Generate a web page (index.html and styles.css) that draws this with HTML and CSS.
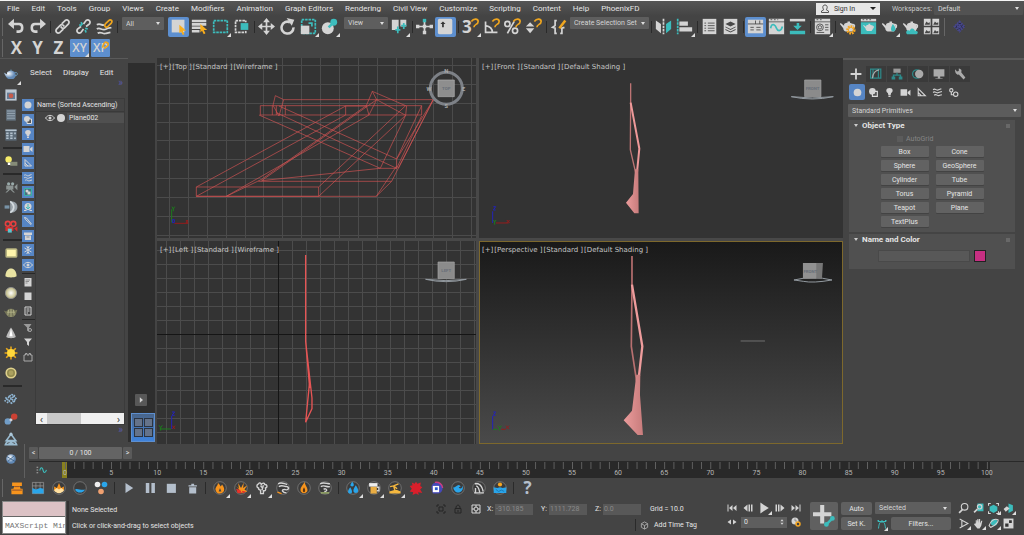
FILE: index.html
```html
<!DOCTYPE html>
<html lang="en">
<head>
<meta charset="utf-8">
<meta name="viewport" content="width=device-width, initial-scale=1">
<title>Scene editor</title>
<link rel="stylesheet" href="styles.css">
</head>
<body>
<svg class="defs" aria-hidden="true">
  <defs>
    <symbol id="teapot" viewBox="0 0 20 20"><path class="l" d="M6 7c2-2 8-2 10 0 3 4 1 8-1 9H8c-3-1-3-4-3-4L1 7l1-1 4 3zM10 4h3v2h-3z"/><path class="sl" d="M15 8c4-1 4 3 1 4"/></symbol>
    <symbol id="sphere" viewBox="0 0 20 20"><circle class="l" cx="10" cy="10" r="7"/></symbol>
    <symbol id="shapes" viewBox="0 0 20 20"><circle class="l" cx="8" cy="8" r="6"/><path d="M8 8h9v9H8z" fill="#555" stroke="#ddd" stroke-width="2"/><circle cx="10" cy="10" r="3" class="l"/></symbol>
    <symbol id="bulb" viewBox="0 0 20 20"><path class="l" d="M10 2c7 0 7 7 3 9l-1 4H8l-1-4C3 9 3 2 10 2zM8 16h4v2H8z"/></symbol>
    <symbol id="camera" viewBox="0 0 20 20"><path class="l" d="M1 4h12v12H1zM14 9l5-4v11l-5-4z"/></symbol>
    <symbol id="helper" viewBox="0 0 20 20"><path class="sl" stroke-width="3" d="M4 3v13h13zM4 10l6 6"/></symbol>
    <symbol id="waves" viewBox="0 0 20 20"><path class="sl" d="M2 5c4-4 6 3 10 0l5-2M2 10c4-4 6 3 10 0l6-2M4 15c4-4 6 3 10 0l4-1"/></symbol>
    <symbol id="magnet" viewBox="0 0 20 20"><path class="so" d="M11 4c3-4 8-3 8 0 0 4-5 3-5 7"/></symbol>
    <symbol id="eye" viewBox="0 0 20 20"><path class="sl" d="M1 10c5-7 13-7 18 0-5 7-13 7-18 0z"/><circle class="l" cx="10" cy="10" r="3"/></symbol>
    <symbol id="plus" viewBox="0 0 20 20"><path class="l" d="M8 1h4v7h7v4h-7v7H8v-7H1V8h7z"/></symbol>
    <radialGradient id="ball" cx=".4" cy=".35"><stop offset="0" stop-color="#fff"/><stop offset="1" stop-color="#6289b5"/></radialGradient>
    <radialGradient id="cream"><stop offset="0" stop-color="#fff"/><stop offset="1" stop-color="#bcb67c"/></radialGradient>
    <linearGradient id="skin" x1="0" x2="1"><stop offset="0" stop-color="#eb9c9c"/><stop offset="1" stop-color="#c87c7c"/></linearGradient>
    <pattern id="grid14" width="14" height="14" patternUnits="userSpaceOnUse" x="9" y="9"><path d="M0 .5h14M.5 0v14" stroke="#4c4c4c"/></pattern>
  </defs>
</svg>

<header class="menubar">
  <nav class="menus" aria-label="Main menu">
    <button>File</button><button>Edit</button><button>Tools</button><button>Group</button><button>Views</button><button>Create</button><button>Modifiers</button><button>Animation</button><button>Graph Editors</button><button>Rendering</button><button>Civil View</button><button>Customize</button><button>Scripting</button><button>Content</button><button>Help</button><button>PhoenixFD</button>
  </nav>
  <button class="signin"><svg viewBox="0 0 20 20"><path fill="none" stroke="#555" stroke-width="2" d="M10 2c6 0 5 8 2 9l5 3v3H3v-3l5-3C5 10 4 2 10 2z"/></svg><span>Sign In</span><i class="caret"></i></button>
  <label class="ws" for="workspace">Workspaces:</label>
  <span class="drop workspace"><select id="workspace"><option>Default</option></select></span>
</header>

<div class="toolbar" role="toolbar" aria-label="Main toolbar">
  <i class="grip"></i>
  <button class="ico" aria-label="Undo"><svg viewBox="0 0 20 20"><path class="sl b" d="M4 7h9c5 0 5 9 0 9h-3"/><path class="l" d="M0 7l7-6v12z"/></svg></button>
  <button class="ico" aria-label="Redo"><svg viewBox="0 0 20 20"><path class="sl b" d="M16 7H7c-5 0-5 9 0 9h3"/><path class="l" d="M20 7l-7-6v12z"/></svg></button>
  <i class="sep"></i>
  <button class="ico" aria-label="Link"><svg viewBox="0 0 20 20"><path class="sl" d="M9 7l4-4c3-2 6 1 4 4l-4 4c-2 2-4 1-5-1M11 13l-4 4c-3 2-6-1-4-4l4-4c2-2 4-1 5 1"/></svg></button>
  <button class="ico" aria-label="Unlink"><svg viewBox="0 0 20 20"><path class="sl" d="M10 7l3-4c3-2 6 1 4 4l-4 3M10 13l-3 4c-3 2-6-1-4-4l4-3"/><path class="st" d="M7 5l2 3M5 8l3 1M12 12l3 1M12 14l1 3"/></svg></button>
  <button class="ico" aria-label="Bind to space warp"><svg viewBox="0 0 20 20"><path class="sl" d="M1 8c4-3 6 2 9 0M1 13c4-3 6 3 11 0 3-2 5-1 6-2M2 18c4-3 6 2 10 0l5-1"/><path class="so" d="M11 7l4-4c2-2 5 0 3 3l-4 4c-2 2-5 0-3-3z"/></svg></button>
  <i class="sep wide"></i>
  <span class="drop filter"><select aria-label="Selection filter"><option>All</option></select></span>
  <button class="ico on first" aria-label="Select object"><svg viewBox="0 0 20 20"><path class="l" d="M2 2h15v15H2z"/><path class="o" d="M11 8l8 7h-4l2 4-2 1-2-4-2 2z"/></svg></button>
  <button class="ico" aria-label="Select by name"><svg viewBox="0 0 20 20"><path class="l" d="M1 2h17v3H1zM1 6h17v3H1zM1 10h11v3H1zM1 14h9v3H1z"/><path class="o" d="M11 7l8 7h-4l2 4-2 1-2-4-2 2z"/></svg></button>
  <button class="ico fly" aria-label="Rectangular region"><svg viewBox="0 0 20 20"><path class="st dash" d="M2 3h16v14H2z"/></svg></button>
  <button class="ico" aria-label="Window crossing"><svg viewBox="0 0 20 20"><path class="sl dash" d="M3 3h12v14H3z"/><path fill="#444" d="M8 5h11v10H8z"/><path class="t" d="M9 6h9v8H9z"/></svg></button>
  <i class="sep"></i>
  <button class="ico" aria-label="Move"><svg viewBox="0 0 20 20"><path class="sl" d="M10 3v14M3 10h14"/><path class="l" d="M10 0l4 5H6zM10 20l4-5H6zM0 10l5-4v8zM20 10l-5-4v8z"/></svg></button>
  <button class="ico" aria-label="Rotate"><svg viewBox="0 0 20 20"><path class="sl b" d="M13 5a7 7 0 1 0 4 6"/><path class="l" d="M9 0l9 2-3 7z"/></svg></button>
  <button class="ico fly" aria-label="Scale"><svg viewBox="0 0 20 20"><path class="st dash" d="M2 2h16v16H2z"/><path class="l" d="M1 9h10v10H1z"/><path class="st" d="M10 6h4v4"/></svg></button>
  <button class="ico fly" aria-label="Place"><svg viewBox="0 0 20 20"><circle class="l" cx="8" cy="12" r="7"/><path class="st b" d="M9 11l5-5"/><circle class="t" cx="15" cy="5" r="4"/></svg></button>
  <span class="drop coord"><select aria-label="Reference coordinate system"><option>View</option></select></span>
  <button class="ico fly" aria-label="Pivot center"><svg viewBox="0 0 20 20"><path class="l" d="M1 2h8v12H1zM11 2h7v8h-7z"/><path class="st" d="M8 10v8M5 14h6M15 6v7M12 9h6"/></svg></button>
  <i class="sep"></i>
  <button class="ico" aria-label="Manipulate"><svg viewBox="0 0 20 20"><path class="sl" d="M10 3v14M2 10h16"/><path class="l" d="M8 8h4v4H8zM0 8h4v4H0zM16 8h4v4h-4zM8 15h4v4H8z"/><path class="t" d="M8 1h4v4H8z"/></svg></button>
  <button class="ico on" aria-label="Keyboard override"><svg viewBox="0 0 20 20"><rect class="l" x="1" y="1" width="17" height="18" rx="2"/><path fill="#333" d="M7 4l3 3H8v4H6V7H4z"/></svg></button>
  <i class="sep"></i>
  <button class="ico fly glyph snap" aria-label="3D snap">3<svg viewBox="0 0 20 20"><use href="#magnet"/></svg></button>
  <button class="ico" aria-label="Angle snap"><svg viewBox="0 0 20 20"><path class="sl" d="M3 4v13h14M3 9c6 1 8 4 8 8"/><use href="#magnet"/></svg></button>
  <button class="ico" aria-label="Percent snap"><svg viewBox="0 0 20 20"><circle class="sl" cx="4" cy="7" r="3"/><circle class="sl" cx="13" cy="15" r="3"/><path class="sl" d="M12 4L4 18"/><use href="#magnet"/></svg></button>
  <button class="ico" aria-label="Spinner snap"><svg viewBox="0 0 20 20"><path class="l" d="M6 5l5 5H1zM6 18l5-6H1z"/><use href="#magnet"/></svg></button>
  <i class="sep"></i>
  <button class="ico" aria-label="Edit selection sets"><svg viewBox="0 0 20 20"><path class="sl" d="M8 3H6v6l-3 2 3 1v6h2M12 18h2v-6l3-1"/><path class="so b" d="M18 3l-7 9"/></svg></button>
  <span class="drop sets"><select aria-label="Named selection sets"><option>Create Selection Set</option></select></span>
  <i class="sep"></i>
  <button class="ico" aria-label="Mirror"><svg viewBox="0 0 20 20"><path class="l" d="M1 3l6 4v11l-6-5z"/><path class="t" d="M19 3l-6 4v11l6-5z"/><path class="sl dash" d="M10 1v18"/></svg></button>
  <button class="ico fly" aria-label="Align"><svg viewBox="0 0 20 20"><path class="st dash" d="M2 1v18"/><path class="l" d="M4 4h10v5H4zM4 11h15v5H4z"/></svg></button>
  <i class="sep"></i>
  <button class="ico" aria-label="Scene explorer"><svg viewBox="0 0 20 20"><path class="l" d="M2 1h16v18H2z"/><path class="sd" d="M4 6h2M8 6h8M4 9h2M8 9h8M4 12h2M8 12h8M4 15h2M8 15h8"/></svg></button>
  <button class="ico" aria-label="Layer explorer"><svg viewBox="0 0 20 20"><path class="l" d="M2 1h16v18H2z"/><path fill="#484848" d="M4 7l6-3 6 3-6 3zM4 10l6 3 6-3v1l-6 3-6-3zM4 13l6 3 6-3v1l-6 3-6-3z"/></svg></button>
  <i class="sep"></i>
  <button class="ico on" aria-label="Ribbon"><svg viewBox="0 0 20 20"><path class="l" d="M1 2h18v16H1z"/><path class="sd" d="M1 7h18M10 3v4M15 3v4M4 11h4M11 11h5M4 14h4M11 14h5"/></svg></button>
  <button class="ico" aria-label="Curve editor"><svg viewBox="0 0 20 20"><path class="l" d="M1 1h18v3H1zM1 5h18v14H1z"/><path class="st" d="M3 12c2-8 6-3 7 0s5 5 7-2"/><path class="sd" d="M3 2h2M7 2h2M11 2h1"/></svg></button>
  <button class="ico" aria-label="Schematic view"><svg viewBox="0 0 20 20"><path class="l" d="M1 1h18v3H1z"/><path class="t" d="M9 6h3v3h3l-5 5-5-5h4zM1 15h18v4H1z"/></svg></button>
  <i class="sep"></i>
  <button class="ico fly" aria-label="Material editor"><svg viewBox="0 0 20 20"><path class="l" d="M1 1h18v3H1zM1 5h18v14H1z"/><circle cx="7" cy="11" r="4" class="sd"/><circle cx="7" cy="11" r="2" class="sd"/><path class="sd" d="M3 2h2M7 2h2M13 8h4M13 11h4M13 14h4M3 17h9"/></svg></button>
  <i class="sep"></i>
  <button class="ico" aria-label="Render setup"><svg viewBox="0 0 20 20"><use href="#teapot"/><circle cx="14" cy="14" r="4" fill="none" stroke="#f5a623" stroke-width="3" stroke-dasharray="2 1"/><circle cx="14" cy="14" r="3" fill="none" stroke="#f5a623"/></svg></button>
  <button class="ico" aria-label="Rendered frame window"><svg viewBox="0 0 20 20"><path class="l" d="M1 1h18v3H1z"/><path class="t" d="M1 5h18v14H1z"/><use href="#teapot" x="3" y="4" width="14" height="14"/><path class="sd" d="M3 2h2M7 2h2M11 2h2"/></svg></button>
  <button class="ico fly" aria-label="Render production"><svg viewBox="0 0 20 20"><use href="#teapot"/><path class="t" d="M14 7c4 5 4 8 0 9-3-1-3-4 0-9z"/></svg></button>
  <button class="ico" aria-label="Render in cloud"><svg viewBox="0 0 20 20"><use href="#teapot"/><path class="t" d="M6 19c-3-3 1-6 3-4 2-5 6-2 6 0 5 0 4 4 2 4z"/></svg></button>
  <button class="ico" aria-label="Render gallery"><svg viewBox="0 0 20 20"><path class="l" d="M1 1h8v8H1zM11 1h8v8h-8zM1 11h8v8H1zM11 11h8v8h-8z"/><path fill="#484848" d="M2 8l2-4 2 2 2-1v3zM12 8l2-4 2 2 2-1v3zM2 18l2-4 2 2 2-1v3zM12 18l2-4 2 2 2-1v3z"/></svg></button>
  <i class="grip"></i>
  <button class="ico" aria-label="Plugin"><svg viewBox="0 0 20 20"><path d="M10 4l6 6-6 6-6-6zM10 4v12M4 10h12M7 7l6 6M13 7l-6 6" fill="#282944" stroke="#47478a" stroke-width="2" stroke-dasharray="2 1"/></svg></button>
</div>

<div class="toolbar axis" role="toolbar" aria-label="Axis constraints">
  <i class="grip"></i>
  <button class="ico glyph">X</button><button class="ico glyph">Y</button><button class="ico glyph">Z</button>
  <button class="ico glyph small on fly">XY</button>
  <button class="ico glyph small on">XP<svg viewBox="0 0 20 20"><path class="so" d="M11 9l2-5c2-3 7 0 4 3l-4 3"/></svg></button>
</div>

<div class="work">
  <aside class="left-tools" aria-label="Render tools">
    <button class="ico fly" aria-label="Teapot render"><svg viewBox="0 0 20 20"><path fill="url(#ball)" d="M5 7c2-3 8-3 10 0 2 4 0 7-2 8H7c-3-1-3-3-4-4L1 7l4 2z"/><path fill="none" stroke="#6da4ca" d="M15 7c4-1 4 4 0 4M9 4h2"/></svg></button>
    <button class="ico" aria-label="Frame buffer"><svg viewBox="0 0 20 20"><path fill="#bcc8d4" d="M3 3h14v14H3z"/><path fill="#667c94" d="M5 7h10v8H5z"/><circle cx="10" cy="11" r="3" fill="#c65b4b"/></svg></button>
    <button class="ico" aria-label="Properties"><svg viewBox="0 0 20 20"><path fill="#677683" d="M4 3h12v14H4z"/><path stroke="#a3b3c0" d="M5 5h10M5 8h10M5 11h10M5 14h10"/></svg></button>
    <button class="ico" aria-label="Asset table"><svg viewBox="0 0 20 20"><path fill="#5c6b78" d="M3 3h14v14H3z"/><path stroke="#b5c4d0" stroke-width="2" d="M3 4h14M4 8h3M9 8h3M14 8h2M4 11h3M9 11h3M4 14h3M9 14h3M14 14h2"/></svg></button>
    <hr>
    <button class="ico" aria-label="Light"><svg viewBox="0 0 20 20"><circle cx="7" cy="8" r="4" fill="#f7ec6a"/><path fill="#fff" d="M6 12h4v3H6z"/><path fill="#858b78" d="M9 11h9v5H9z"/></svg></button>
    <hr>
    <button class="ico" aria-label="Camera rig"><svg viewBox="0 0 20 20"><circle cx="7" cy="6" r="2" fill="#9aa"/><circle cx="12" cy="6" r="2" fill="#9aa"/><path fill="#8c9493" d="M4 8h9v5H4zM14 10l4-4v8zM7 13l-4 4h2l4-4zM9 13l4 4h2l-4-4z"/></svg></button>
    <button class="ico" aria-label="Dome camera"><svg viewBox="0 0 20 20"><path fill="#9aa3aa" d="M9 3c12-1 12 15 0 14z"/><path fill="none" stroke="#d5dce0" stroke-width="2" d="M9 3c6 4 6 10 0 14"/><path fill="#7893a7" d="M2 8h6v4H2z"/></svg></button>
    <button class="ico" aria-label="Stereo camera"><svg viewBox="0 0 20 20"><circle cx="6" cy="6" r="3" fill="#444" stroke="#e54040" stroke-width="2"/><circle cx="13" cy="6" r="3" fill="#444" stroke="#e54040" stroke-width="2"/><path fill="#d82d2d" d="M3 10h10v5H3zM14 12l4-3v7z"/><path fill="#5cc4cc" d="M6 12h5v5H6z"/></svg></button>
    <hr>
    <button class="ico" aria-label="Plane light"><svg viewBox="0 0 20 20"><rect x="4" y="5" width="13" height="10" rx="1" fill="#fff5ac" stroke="#b6b27f" stroke-width="2"/></svg></button>
    <button class="ico" aria-label="Dome light"><svg viewBox="0 0 20 20"><path fill="#e9e3a2" d="M3 14c0-13 14-13 14 0-3 2-11 2-14 0z"/></svg></button>
    <button class="ico" aria-label="Sphere light"><svg viewBox="0 0 20 20"><circle cx="10" cy="10" r="7" fill="url(#cream)" stroke="#999"/></svg></button>
    <button class="ico" aria-label="Mesh light"><svg viewBox="0 0 20 20"><path fill="#77775a" d="M5 7c2-3 8-3 10 0l3-1-2 6-3 3H7l-3-3-3-5 3 1z"/><path stroke="#b8b88c" fill="none" d="M5 9h10M10 5v10M7 6l-1 7M13 6l1 7"/></svg></button>
    <button class="ico" aria-label="IES light"><svg viewBox="0 0 20 20"><path fill="#bcbcbc" d="M10 3c2 3 5 8 6 12-3 2-9 2-12 0C5 11 8 6 10 3z"/><path fill="#fff" d="M10 4l2 10H8z"/></svg></button>
    <button class="ico" aria-label="Sun"><svg viewBox="0 0 20 20"><path stroke="#e9a81a" stroke-width="2" d="M10 2v16M2 10h16M4 4l12 12M4 16L16 4"/><circle cx="10" cy="10" r="5" fill="#ffd83c"/></svg></button>
    <button class="ico" aria-label="Ambient light"><svg viewBox="0 0 20 20"><circle cx="10" cy="10" r="6" fill="#928a4e" stroke="#ded08c" stroke-width="2"/><circle cx="10" cy="10" r="3" fill="#aca15f"/></svg></button>
    <hr>
    <button class="ico" aria-label="Fur"><svg viewBox="0 0 20 20"><path stroke="#8fb5d3" stroke-width="2" stroke-dasharray="2 1" d="M3 8l7 7M7 6l8 8M11 4l6 6M2 13l9-9M5 15l10-10M10 16l7-7"/></svg></button>
    <button class="ico" aria-label="Metaballs"><svg viewBox="0 0 20 20"><circle cx="6" cy="13" r="4" fill="#719dc7"/><circle cx="10" cy="11" r="2" fill="#d0d0d6"/><circle cx="14" cy="7" r="4" fill="#cc4134"/></svg></button>
    <button class="ico" aria-label="Clipper"><svg viewBox="0 0 20 20"><path fill="none" stroke="#9abbd0" stroke-width="2" d="M10 4L4 12h12zM3 17c2-6 12-6 14 0zM6 12l8 5M14 12l-8 5"/><circle cx="10" cy="4" r="2" fill="#adc7d8"/></svg></button>
    <button class="ico" aria-label="Proxy"><svg viewBox="0 0 20 20"><circle cx="10" cy="10" r="6" fill="url(#ball)"/><path stroke="#345c85" fill="none" d="M5 7l10 6M6 13l8-7"/></svg></button>
  </aside>

  <aside class="explorer" aria-label="Scene explorer">
    <nav class="ex-menu"><button>Select</button><button>Display</button><button>Edit</button></nav>
    <p class="more">»</p>
    <div class="ex-body">
      <div class="ex-filters">
        <button class="sq on" aria-label="Geometry"><svg viewBox="0 0 20 20"><use href="#sphere"/></svg></button>
        <button class="sq on" aria-label="Shapes"><svg viewBox="0 0 20 20"><use href="#shapes"/></svg></button>
        <button class="sq on" aria-label="Lights"><svg viewBox="0 0 20 20"><use href="#bulb"/></svg></button>
        <button class="sq on" aria-label="Cameras"><svg viewBox="0 0 20 20"><use href="#camera"/></svg></button>
        <button class="sq on" aria-label="Helpers"><svg viewBox="0 0 20 20"><use href="#helper"/></svg></button>
        <button class="sq on" aria-label="Space warps"><svg viewBox="0 0 20 20"><use href="#waves"/></svg></button>
        <button class="sq on" aria-label="Groups"><svg viewBox="0 0 20 20"><path fill="#48717d" stroke="#39b0a8" stroke-width="2" d="M3 3h14v14H3z"/><circle cx="8" cy="8" r="3" class="l"/><path class="l" d="M9 9h6v6H9z"/></svg></button>
        <button class="sq on" aria-label="References"><svg viewBox="0 0 20 20"><circle cx="10" cy="9" r="7" class="l"/><path class="st" d="M10 4v10M6 10l4 4 4-4"/><path class="sl" d="M2 17h5M13 17h5"/></svg></button>
        <button class="sq on" aria-label="Bones"><svg viewBox="0 0 20 20"><path class="sl" d="M3 3l4 1 10 12-1 1L5 7z"/></svg></button>
        <button class="sq on" aria-label="Containers"><svg viewBox="0 0 20 20"><path class="l" d="M2 3h16v5H2zM4 9h12v9H4z"/><path class="sd" d="M7 12h6"/></svg></button>
        <button class="sq on" aria-label="Frozen"><svg viewBox="0 0 20 20"><path class="sl" d="M10 2v16M3 6l14 8M3 14l14-8M7 3l3 3 3-3M7 17l3-3 3 3"/></svg></button>
        <button class="sq on" aria-label="Hidden"><svg viewBox="0 0 20 20"><use href="#eye"/></svg></button>
        <hr>
        <button class="sq" aria-label="All"><svg viewBox="0 0 20 20"><path class="l" d="M3 2h14v17H3z"/><path class="sd" d="M5 6h9M5 9h7M5 12h4"/></svg></button>
        <button class="sq" aria-label="None"><svg viewBox="0 0 20 20"><path class="l" d="M3 3h14v15H3z"/></svg></button>
        <button class="sq" aria-label="Invert"><svg viewBox="0 0 20 20"><path class="sl" d="M4 2h12v16H4zM7 6h6M7 10h6M7 14h3"/></svg></button>
        <hr>
        <button class="sq" aria-label="Configure filter"><svg viewBox="0 0 20 20"><path fill="#999" d="M1 2h16l-5 7v9l-4-3V9z"/><circle cx="14" cy="14" r="3" fill="#444" stroke="#aaa" stroke-width="2"/></svg></button>
        <button class="sq" aria-label="Filter"><svg viewBox="0 0 20 20"><path class="l" d="M2 3h16l-6 7v8l-4-3v-5z"/></svg></button>
        <button class="sq" aria-label="Container"><svg viewBox="0 0 20 20"><path class="sg" d="M2 6h3V3h3v3h4V3h3v3h3v12H2z"/></svg></button>
      </div>
      <div class="ex-list">
        <button class="ex-head">Name (Sorted Ascending)</button>
        <div class="ex-row"><svg viewBox="0 0 20 20"><use href="#eye"/></svg><svg viewBox="0 0 20 20"><circle class="l" cx="10" cy="10" r="8"/></svg><span>Plane002</span></div>
        <div class="ex-scroll"><button aria-label="Scroll left">‹</button><i></i><button aria-label="Scroll right">›</button></div>
      </div>
    </div>
    <p class="more">»</p>
  </aside>

  <div class="gutter">
    <button class="expand" aria-label="Expand"><svg viewBox="0 0 20 20"><path class="l" d="M7 3l8 7-8 7z"/></svg></button>
    <button class="layout" aria-label="Viewport layout"><i></i><i></i><i></i><i></i></button>
  </div>

  <main class="views">
    <section class="view">
      <svg viewBox="0 0 319 180" preserveAspectRatio="xMidYMid slice">
        <path class="grid" d="M12.500 0v180M31.500 0v180M50.500 0v180M69.500 0v180M88.500 0v180M106.500 0v180M125.500 0v180M144.500 0v180M163.500 0v180M182.500 0v180M201.500 0v180M220.500 0v180M239.500 0v180M258.500 0v180M276.500 0v180M295.500 0v180M314.500 0v180M0 7.500h319M0 26.500h319M0 45.500h319M0 64.500h319M0 82.500h319M0 101.500h319M0 120.500h319M0 139.500h319M0 158.500h319M0 177.500h319"/>
        <g transform="translate(-2 -2) scale(.3333)">
          <path class="wire" d="M124 421V393H491V421H124L572 177V150M124 393L572 150H634M124 421H664L710 376L835 131H386L361 119L354 148L372 180L386 131M316 149V177H800V149H316M352 149V177M364 149V177M391 149V177M312 177L676 337H725V309L372 150M364 170L725 337M725 309L800 149M725 337L800 180M491 393L752 149L652 106L634 149L642 177L665 131L652 106M665 131L752 178L755 149M491 421L752 178L676 337L320 374M214 421L642 177M214 421L320 370L634 149M310 376H710M320 374L665 131M664 421L725 330M835 131L725 309M835 131L730 337"/>
          <path class="ax" stroke="#1d7a1d" d="M50 500V460M51 452l4 7 4-7M55 459v7"/><path class="ax" stroke="#951c1c" d="M58 502H100M93 492l6 9M99 492l-6 9"/><path class="ax" stroke="#2323b8" d="M52 491h6v9h-6z"/>
          <circle cx="874" cy="97" r="48" fill="none" stroke="#7d8187" stroke-width="9"/>
          <path fill="#8e8e8e" stroke="#b2b2b2" stroke-width="2" d="M849 72h49v50h-49z"/>
          <g class="cube"><text x="874" y="102">TOP</text></g>
          <g class="compass"><text x="874" y="52">N</text><text x="874" y="156">S</text><text x="822" y="104">W</text><text x="926" y="104">E</text></g>
        </g>
      </svg>
      <div class="tag"><button>[+]</button><button>[Top ]</button><button>[Standard ]</button><button>[Wireframe ]</button></div>
    </section>
    <section class="view">
      <svg viewBox="0 0 364 180" preserveAspectRatio="xMidYMid slice">
        <g transform="translate(-1 -2) scale(.3333)">
          <path fill="none" stroke="#bd7474" stroke-width="4" d="M458 82V140L457 281L473 350"/>
          <path fill="none" stroke="#e99" stroke-width="6" d="M458 140L484 278L477 350"/>
          <path fill="url(#skin)" d="M471 340h10l1 132h-13l-25-32 21-26z"/>
          <path class="ax" stroke="#2323b8" d="M44 501V466M46 452h7l-7 10h7"/><path class="ax" stroke="#951c1c" d="M54 501H92M86 492l9 9M95 492l-9 9"/><path class="ax" stroke="#1d7a1d" d="M46 492l4 6 4-6M50 498v8"/>
          <path class="halo" d="M940 122Q1003 130 1066 122Q1003 136 940 122"/><path fill="#8b8b8b" stroke="#a5a5a5" stroke-width="2" d="M980 72h49v50h-49z"/><g class="cube"><text x="1004" y="102">FRONT</text></g>
        </g>
      </svg>
      <div class="tag"><button>[+]</button><button>[Front ]</button><button>[Standard ]</button><button>[Default Shading ]</button></div>
    </section>
    <section class="view">
      <svg viewBox="0 0 319 203" preserveAspectRatio="xMidYMid slice">
        <path fill="url(#grid14)" d="M0 0h319v203H0z"/><path stroke="#151515" d="M121.500 0v203M0 93.500h319"/>
        <g transform="translate(-2 -3) scale(.3333)">
          <path fill="none" stroke="#e65555" stroke-width="4" d="M452 51V310L471 480L471 512L452 553L463 440M452 310L464 450"/>
          <path class="ax" stroke="#2323b8" d="M50 573V534M51 522h8l-8 10h8"/><path class="ax" stroke="#1d7a1d" d="M48 573H14M12 562l5 7 5-7M17 569v9"/><path class="ax" stroke="#951c1c" d="M52 563l8 10M60 563l-8 10"/>
          <path class="halo" d="M812 124Q873 132 934 124Q873 138 812 124"/><path fill="#8b8b8b" stroke="#a5a5a5" stroke-width="2" d="M849 72h49v50h-49z"/><g class="cube"><text x="874" y="102">LEFT</text></g>
        </g>
      </svg>
      <div class="tag"><button>[+]</button><button>[Left ]</button><button>[Standard ]</button><button>[Wireframe ]</button></div>
    </section>
    <section class="view active">
      <svg viewBox="0 0 364 203" preserveAspectRatio="xMidYMid slice">
        <g transform="translate(-1 -3) scale(.3333)">
          <path fill="none" stroke="#b87070" stroke-width="5" d="M462 54V138L460 325L476 430"/>
          <path fill="none" stroke="#ee9c9c" stroke-width="7" d="M462 140L493 325L481 430"/>
          <path fill="url(#skin)" d="M475 410h12l-1 60 9 121h-16l-42-44 25-29z"/>
          <path stroke="#707070" stroke-width="3" d="M788 309H861"/>
          <path class="ax" stroke="#2323b8" d="M44 574V534M46 522h7l-7 10h7"/><path class="ax" stroke="#951c1c" d="M70 574H82M84 563l9 10M93 563l-9 10"/><path class="ax" stroke="#1d7a1d" d="M46 574H58M60 563l5 7 5-7M65 570v8"/>
          <path class="halo" d="M948 126Q1005 112 1062 126Q1005 136 976 130Z"/><path fill="#777" d="M975 75h60l-3 47h-57z"/><path fill="#919191" d="M975 75h40v47h-40z"/><g class="cube"><text x="997" y="104">FRONT</text></g>
        </g>
      </svg>
      <div class="tag"><button>[+]</button><button>[Perspective ]</button><button>[Standard ]</button><button>[Default Shading ]</button></div>
    </section>
  </main>

  <aside class="panel" aria-label="Command panel">
    <nav class="tabs">
      <button class="on" aria-label="Create"><svg viewBox="0 0 20 20"><path class="sl b" d="M10 1v18M1 10h18"/></svg></button>
      <button aria-label="Modify"><svg viewBox="0 0 20 20"><path fill="none" stroke="#2d8a8a" stroke-width="2" d="M1 2h17v15H1zM5 2v15M14 2v15"/><path class="sg" d="M4 17C5 8 8 4 15 3"/></svg></button>
      <button aria-label="Hierarchy"><svg viewBox="0 0 20 20"><path fill="#999" d="M4 1h12v7H4z"/><path fill="none" stroke="#2d8a8a" stroke-width="2" d="M10 8v4M4 16v-4h12v4"/><path fill="#2d8a8a" d="M1 14h6v5H1zM13 14h6v5h-6z"/></svg></button>
      <button aria-label="Motion"><svg viewBox="0 0 20 20"><circle cx="8" cy="10" r="7" fill="none" stroke="#2d8a8a" stroke-width="2"/><circle cx="12" cy="10" r="7" fill="#aaa"/></svg></button>
      <button aria-label="Display"><svg viewBox="0 0 20 20"><path fill="#aaa" d="M1 2h18v12H1zM8 14h4v3h4v1H4v-1h4z"/></svg></button>
      <button aria-label="Utilities"><svg viewBox="0 0 20 20"><path fill="#aaa" d="M2 2l3 4 3-1 0-4c5 1 5 4 4 6l7 9-3 3-8-8C5 12 1 8 2 2z"/></svg></button>
    </nav>
    <nav class="cats">
      <button class="on" aria-label="Geometry"><svg viewBox="0 0 20 20"><use href="#sphere"/></svg></button>
      <button aria-label="Shapes"><svg viewBox="0 0 20 20"><use href="#shapes"/></svg></button>
      <button aria-label="Lights"><svg viewBox="0 0 20 20"><use href="#bulb"/></svg></button>
      <button aria-label="Cameras"><svg viewBox="0 0 20 20"><use href="#camera"/></svg></button>
      <button aria-label="Helpers"><svg viewBox="0 0 20 20"><use href="#helper"/></svg></button>
      <button aria-label="Space warps"><svg viewBox="0 0 20 20"><use href="#waves"/></svg></button>
      <button aria-label="Systems"><svg viewBox="0 0 20 20"><circle cx="6" cy="6" r="3" class="sl"/><circle cx="14" cy="13" r="4" class="sl"/><path class="sl" d="M6 9v5h4"/></svg></button>
    </nav>
    <span class="drop kind"><select aria-label="Object category"><option>Standard Primitives</option></select></span>
    <section class="roll">
      <h2>Object Type</h2>
      <label class="autogrid"><input type="checkbox" disabled>AutoGrid</label>
      <div class="types"><button>Box</button><button>Cone</button><button>Sphere</button><button>GeoSphere</button><button>Cylinder</button><button>Tube</button><button>Torus</button><button>Pyramid</button><button>Teapot</button><button>Plane</button><button>TextPlus</button></div>
    </section>
    <section class="roll">
      <h2>Name and Color</h2>
      <div class="namecolor"><input type="text" aria-label="Object name"><button class="swatch" aria-label="Object color"></button></div>
    </section>
  </aside>

  <section class="timeline" aria-label="Timeline">
    <div class="slider"><button>&lt;</button><button class="thumb">0 / 100</button><button>&gt;</button></div>
    <div class="track">
      <button class="mini" aria-label="Mini curve editor"><svg viewBox="0 0 20 20"><path stroke="#aaa" stroke-width="2" stroke-dasharray="3 2" d="M1 4h4M1 9h4M1 14h4"/><path class="st" d="M7 10c2-9 5-4 6 0s4 6 6-1"/></svg></button>
      <div class="frames"><div class="ticks"></div><div class="nums"><span>0</span><span>5</span><span>10</span><span>15</span><span>20</span><span>25</span><span>30</span><span>35</span><span>40</span><span>45</span><span>50</span><span>55</span><span>60</span><span>65</span><span>70</span><span>75</span><span>80</span><span>85</span><span>90</span><span>95</span><span>100</span></div></div>
    </div>
  </section>
</div>

<div class="toolbar sim" role="toolbar" aria-label="Simulation toolbar">
  <i class="grip"></i>
  <button class="ico" aria-label="Fire simulator"><svg viewBox="0 0 20 20"><path fill="#f7941d" d="M3 2h14v5h-4c2 2 2 3 2 4h3v8H2v-8h3c0-1 0-2 2-4H3z"/><path stroke="#633" d="M3 13h14M7 8h6"/></svg></button>
  <button class="ico" aria-label="Liquid simulator"><svg viewBox="0 0 20 20"><path fill="none" stroke="#999" d="M2 2h16v16H2zM7 2v16M13 2v16M2 7h16"/><path fill="#2aa5ea" d="M2 10l5 2 6-2 5 1v7H2z"/></svg></button>
  <button class="ico" aria-label="Fire"><svg viewBox="0 0 20 20"><circle class="ring" cx="10" cy="10" r="9"/><path fill="#f7941d" d="M3 14V8l4 2 3-7 3 7 4-2v6z"/><path fill="#ffe0a0" d="M3 13l4-3 3 2 3-2 4 3c-2 6-12 6-14 0z"/></svg></button>
  <button class="ico" aria-label="Liquid"><svg viewBox="0 0 20 20"><circle class="ring" cx="10" cy="10" r="9"/><path fill="#2aa5ea" d="M3 12c4-2 9 2 14 0-2 6-12 6-14 0z"/></svg></button>
  <button class="ico" aria-label="Particles"><svg viewBox="0 0 20 20"><circle cx="5" cy="5" r="4" fill="#eee"/><circle cx="15" cy="5" r="4" fill="#2aa5ea"/><circle cx="10" cy="15" r="4" fill="#f0a070"/></svg></button>
  <i class="sep"></i>
  <button class="ico" aria-label="Start"><svg viewBox="0 0 20 20"><path fill="#b4bfcc" d="M5 3l11 7-11 7z"/></svg></button>
  <button class="ico" aria-label="Pause"><svg viewBox="0 0 20 20"><path fill="#b4bfcc" d="M4 3h5v14H4zM12 3h5v14h-5z"/></svg></button>
  <button class="ico" aria-label="Stop"><svg viewBox="0 0 20 20"><path fill="#b4bfcc" d="M4 4h13v13H4z"/></svg></button>
  <button class="ico" aria-label="Delete"><svg viewBox="0 0 20 20"><path fill="#b4bfcc" d="M9 4h4v2h4v2H5V6h4zM6 9h10v9H6z"/></svg></button>
  <i class="sep"></i>
  <button class="ico fly" aria-label="Campfire"><svg viewBox="0 0 20 20"><circle class="ring" cx="10" cy="10" r="9"/><path fill="#f7941d" d="M4 14c-2-5 3-6 3-11 3 2 3 4 4 5l2-3c6 8 2 12-3 13-3 0-5-1-6-4z"/><path fill="#444" d="M8 15l2-5 2 5z"/></svg></button>
  <button class="ico fly" aria-label="Explosion"><svg viewBox="0 0 20 20"><circle class="ring" cx="10" cy="10" r="9"/><path fill="#f7941d" d="M3 7l4 4-1-8 4 7 4-8-1 8 6-4-4 6 4 3-8 2z"/><path fill="#e53329" d="M3 11l6 2 2 5-6-1zM11 14l6 1-4 3z"/></svg></button>
  <button class="ico fly" aria-label="Smoke"><svg viewBox="0 0 20 20"><path class="sl" d="M5 4c2-3 4 0 4 1 2-3 5-2 5 0 4 0 4 4 1 5 1 4-1 4-3 4v4H8v-5c-3 0-3-2-3-3-3-1-3-5 0-6zM8 7l3 3M12 6l-2 7"/></svg></button>
  <button class="ico" aria-label="Cigarette"><svg viewBox="0 0 20 20"><circle class="ring" cx="10" cy="10" r="9"/><path class="sl" d="M3 4c5-3 8 0 13 1M4 8c5-3 7 0 12 0 4 2 1 6-4 4-5 0-3 5 3 5"/><path stroke="#f7941d" stroke-width="2" d="M2 16l6 2"/></svg></button>
  <button class="ico" aria-label="Candle"><svg viewBox="0 0 20 20"><circle class="ring" cx="10" cy="10" r="9"/><path fill="#f7941d" d="M11 1c0 5 4 7 4 12 0 6-10 6-10 0 0-4 2-5 6-12z"/><path fill="#563514" d="M10 9c3 5 1 7 0 7s-3-2 0-7z"/></svg></button>
  <button class="ico" aria-label="Steam"><svg viewBox="0 0 20 20"><circle class="ring" cx="10" cy="10" r="9"/><path class="sl" d="M3 4c5-3 9 0 14 0M4 8c5-3 7 1 13 0M8 12c4-3 7 3 1 3"/><path stroke="#a2b66e" stroke-width="2" d="M4 17h12"/></svg></button>
  <i class="sep"></i>
  <button class="ico fly" aria-label="Water"><svg viewBox="0 0 20 20"><circle class="ring" cx="10" cy="10" r="9"/><path fill="#2aa5ea" d="M9 1c3 4 3 6 0 7-4-1-3-3 0-7zM14 6c5 7 4 11 0 11s-5-4 0-11zM6 9c4 6 3 9 0 9s-5-3 0-9z"/></svg></button>
  <button class="ico fly" aria-label="Beer"><svg viewBox="0 0 20 20"><circle class="ring" cx="10" cy="10" r="9"/><path fill="#e9ad43" d="M5 8h9v10H5z"/><path fill="#eee" d="M3 3h12v5H3z"/><path class="sl" d="M14 9h3v5h-3"/></svg></button>
  <button class="ico fly" aria-label="Island"><svg viewBox="0 0 20 20"><circle class="ring" cx="10" cy="10" r="9"/><path fill="#f5b83f" d="M2 15l7-2h4l5 2v3H2z"/><path fill="none" stroke="#f5b83f" stroke-width="2" d="M10 14L8 7M8 7L3 8M8 7l7-3M8 7l5 4"/></svg></button>
  <button class="ico" aria-label="Splash"><svg viewBox="0 0 20 20"><path fill="#d91f2b" d="M10 1l2 3 5-2-1 5 3 2-3 3 3 5-6-1 1 4-4-2-5 2 1-4-5-1 3-4-3-4 4-1-1-4 4 2z"/></svg></button>
  <button class="ico" aria-label="Paint"><svg viewBox="0 0 20 20"><path fill="#4549b8" d="M2 10c0-5 3-8 8-8 4 0 8 3 8 8s-3 8-8 8H4z"/><path fill="none" stroke="#cc3e83" stroke-width="2" d="M7 2c6-1 11 3 11 8"/><path fill="#fff" d="M4 7h9v9H4z"/><path fill="#2a5aca" d="M7 9h4v4H7z"/></svg></button>
  <button class="ico" aria-label="Ocean"><svg viewBox="0 0 20 20"><circle class="ring" cx="10" cy="10" r="9"/><path fill="#2aa5ea" d="M3 9c3 2 5-4 9-3l2 2-3 1c3 4 6 0 5-3 5 9-10 17-13 3z"/></svg></button>
  <button class="ico" aria-label="Waterfall"><svg viewBox="0 0 20 20"><circle class="ring" cx="10" cy="10" r="9"/><path class="sl" d="M4 4h5c5 2 6 6 7 11M6 7c3 1 4 4 5 9M5 10v6M3 17h14"/></svg></button>
  <button class="ico" aria-label="Sea and sun"><svg viewBox="0 0 20 20"><circle class="ring" cx="10" cy="10" r="9"/><circle cx="10" cy="5" r="3" fill="#f5a623"/><path fill="#2aa5ea" d="M1 9l5 1 4-1 4 1 5-1v8H1z"/><path stroke="#126a9f" fill="none" d="M4 12l4 3 4-2 4 2"/></svg></button>
  <i class="sep"></i>
  <button class="ico glyph help">?</button>
</div>

<footer class="status">
  <div class="listener"><i></i><input type="text" value="MAXScript Mini Listener" aria-label="Script listener"></div>
  <div class="messages"><p>None Selected</p><p>Click or click-and-drag to select objects</p></div>
  <div class="coords">
    <div class="line">
      <button class="tiny dim" aria-label="Isolate"><svg viewBox="0 0 20 20"><path fill="none" stroke="#252525" stroke-width="2" d="M2 6V2h4M14 2h4v4M18 14v4h-4M6 18H2v-4M6 6h8v8H6z"/></svg></button>
      <button class="tiny dim" aria-label="Lock"><svg viewBox="0 0 20 20"><path fill="none" stroke="#252525" stroke-width="2" d="M4 9h12v9H4zM6 9c-1-9 9-9 8 0M10 12v4"/></svg></button>
      <button class="tiny" aria-label="Absolute mode"><svg viewBox="0 0 20 20"><path class="sl" d="M2 2h16v16H2zM10 2v5M10 13v5M2 10h5M13 10h5"/><circle class="sl" cx="10" cy="10" r="4"/></svg></button>
      <label>X: <input type="text" value="-310.185"></label><label>Y: <input type="text" value="1111.728"></label><label>Z: <input type="text" value="0.0"></label><span class="gridsize">Grid = 10.0</span>
    </div>
    <div class="line end"><i class="sep"></i><button class="tag-btn"><svg viewBox="0 0 20 20"><path class="sg" d="M10 2l7 4v8l-7 4-7-4V6zM3 6l7 4 7-4M10 10v8"/></svg>Add Time Tag</button></div>
  </div>
  <div class="play">
    <div class="line">
      <button class="tiny" aria-label="Go to start"><svg viewBox="0 0 20 20"><path class="l" d="M1 3h2v14H1zM11 4v12l-7-6zM19 4v12l-7-6z"/></svg></button>
      <button class="tiny" aria-label="Previous frame"><svg viewBox="0 0 20 20"><path class="l" d="M9 3v14l-8-7zM11 3h3v14h-3zM16 3h3v14h-3z"/></svg></button>
      <button class="tiny big fly" aria-label="Play"><svg viewBox="0 0 20 20"><path class="l" d="M4 1l14 9-14 9z"/></svg></button>
      <button class="tiny" aria-label="Next frame"><svg viewBox="0 0 20 20"><path class="l" d="M1 3h3v14H1zM6 3h3v14H6zM11 3v14l8-7z"/></svg></button>
      <button class="tiny" aria-label="Go to end"><svg viewBox="0 0 20 20"><path class="l" d="M1 4v12l7-6zM9 4v12l7-6zM17 3h2v14h-2z"/></svg></button>
    </div>
    <div class="line">
      <button class="tiny" aria-label="Key mode"><svg viewBox="0 0 20 20"><path class="l" d="M8 5v10l-7-5zM12 5v10l7-5z"/></svg></button>
      <span class="frame"><input type="text" value="0" aria-label="Current frame"><svg viewBox="0 0 10 20"><path class="l" d="M5 3l4 5H1zM5 17l4-5H1z"/></svg></span>
      <button class="tiny" aria-label="Time configuration"><svg viewBox="0 0 20 20"><circle class="l" cx="8" cy="8" r="7"/><path class="sd" d="M8 3v5h4"/><circle cx="14" cy="14" r="4" fill="#444" stroke="#f5a623" stroke-width="3"/></svg></button>
    </div>
  </div>
  <div class="keys">
    <button class="raised setkey" aria-label="Set key"><svg viewBox="0 0 20 20"><use href="#plus" width="17" height="17"/><path class="st" d="M12 17l4-4"/><circle cx="17" cy="12" r="1" class="st"/><circle cx="12" cy="17" r="1" class="st"/></svg></button>
    <button class="raised auto">Auto</button>
    <button class="raised setk">Set K.</button>
    <span class="drop keysel"><select aria-label="Key selection"><option>Selected</option></select></span>
    <button class="tiny fly tangent" aria-label="Tangents"><svg viewBox="0 0 20 20"><path class="st" d="M3 19C4 9 6 5 10 5s6 4 7 14M2 5h16"/><path class="t" d="M8 3h4v4H8zM1 2h3v3H1zM16 2h3v3h-3z"/></svg></button>
    <button class="raised filters">Filters...</button>
  </div>
  <div class="nav">
    <button class="tiny" aria-label="Zoom"><svg viewBox="0 0 20 20"><circle cx="12" cy="7" r="6" class="sl"/><path class="sl b" d="M8 12l-6 6"/></svg></button>
    <button class="tiny" aria-label="Zoom all"><svg viewBox="0 0 20 20"><path class="t" d="M8 1h11v14H8z"/><circle cx="12" cy="7" r="4" class="sl"/><path class="sl b" d="M8 11l-6 6"/></svg></button>
    <button class="tiny fly" aria-label="Zoom extents"><svg viewBox="0 0 20 20"><path class="t" d="M10 3l7 4v7l-7 4-7-4V7z"/><path class="sl" d="M1 5V1h4M15 1h4v4M19 15v4h-4M5 19H1v-4"/></svg></button>
    <button class="tiny fly" aria-label="Zoom extents all"><svg viewBox="0 0 20 20"><path class="t" d="M10 1l8 3v10l-8 4z"/><path class="l" d="M1 11l6-5 5 4-7 6z"/></svg></button>
    <button class="tiny fly" aria-label="Field of view"><svg viewBox="0 0 20 20"><path class="sl" d="M3 2l15 8-15 8M7 4v12"/></svg></button>
    <button class="tiny fly" aria-label="Pan"><svg viewBox="0 0 20 20"><path class="l" d="M5 10V4h2v5l1-7h2v7l1-7h2v8l2-5h2l-2 9-3 5H8l-6-7 1-2z"/></svg></button>
    <button class="tiny fly" aria-label="Orbit"><svg viewBox="0 0 20 20"><circle cx="11" cy="8" r="6" class="t"/><path class="sl" d="M2 14C4 6 12 0 18 3c2 3-5 12-13 14z"/></svg></button>
    <button class="tiny" aria-label="Maximize viewport"><svg viewBox="0 0 20 20"><path class="l" d="M1 1h18v18H1z"/><path fill="#333" d="M11 4h5v5h-5zM4 10h6v6H4z"/></svg></button>
  </div>
</footer>
</body>
</html>
```
FILE: styles.css
```css
* { box-sizing: border-box; }
body {
  margin: 0;
  height: 100vh;
  display: grid;
  grid-template-rows: 16px 21px 21px minmax(0, 1fr) 22px 35px;
  background: #444;
  color: #e4e4e4;
  font: 7px/10px Roboto, "Open Sans", sans-serif;
  overflow: hidden;
}
button, select, input { font: inherit; color: inherit; margin: 0; padding: 0; border: 0; background: none; }
button { display: flex; align-items: center; justify-content: center; white-space: nowrap; }
p, h2, hr { margin: 0; }
svg { display: block; }
.defs { position: absolute; width: 0; height: 0; }

.l { fill: #d4d4d4; }
.t { fill: #3cbcbc; }
.o { fill: #f9ae1c; }
.sl, .st, .so, .sd, .sg { fill: none; stroke-width: 2; }
.sl { stroke: #d4d4d4; }
.st { stroke: #3cbcbc; }
.so { stroke: #eea51f; }
.sd { stroke: #484848; stroke-width: 1; }
.sg { stroke: #aaa; }
.b { stroke-width: 3; }
.dash { stroke-dasharray: 3 1; }
.ring { fill: #3b3b3b; stroke: #858585; }

.menubar { display: flex; align-items: center; border-top: 1px solid #f5f5f5; background: linear-gradient(#555, #444); font-size: 8px; }
.menus { display: flex; gap: 12px; padding-left: 7px; flex: 1; }
.signin { width: 64px; height: 12px; background: #e6e6e6; color: #333; gap: 4px; padding: 0 4px; font-size: 7px; }
.signin svg { width: 10px; height: 10px; }
.signin span { flex: 1; text-align: left; }
.caret { border: 3px solid transparent; border-top-color: #222; border-bottom: 0; }
.ws { margin: 0 2px 0 12px; font-size: 7px; color: #c8c8c8; }
.drop { display: grid; align-items: center; background: #5e5e5e; height: 12px; color: #d4d4d4; border-radius: 1px; font-size: 7px; }
.drop select { grid-area: 1 / 1; width: 100%; height: 100%; padding: 0 4px; appearance: none; }
.drop option { color: #222; }
.drop::after { content: ""; grid-area: 1 / 1; justify-self: end; margin-right: 4px; border: 2px solid transparent; border-top: 3px solid #ddd; border-bottom: 0; pointer-events: none; }
.workspace { width: 89px; margin-right: 1px; background: #525252; }

.toolbar { display: flex; align-items: center; padding-left: 2px; }
.grip { width: 1px; height: 18px; background: #666; margin-right: 3px; flex: none; }
.sep { width: 1px; height: 12px; background: #2a2a2a; margin: 0 1px 0 2px; flex: none; }
.wide { margin-right: 4px; }
.ico { position: relative; width: 21px; height: 20px; flex: none; border-radius: 2px; }
.ico svg { width: 17px; height: 17px; }
.ico.on { background: #5d8fcf; }
.ico.first { margin-left: 4px; }
.fly { position: relative; }
.fly::after { content: ""; position: absolute; right: 0; bottom: 0; border: 2px solid transparent; border-right-color: #ddd; border-bottom-color: #ddd; }
.glyph { font: bold 17px/20px "Open Sans", sans-serif; color: #d4d4d4; }
.glyph svg { position: absolute; top: 1px; left: 2px; }
.snap { justify-content: flex-start; padding-left: 2px; }
.small { font-size: 12px; font-weight: 600; }
.axis .ico.on { border: 1px solid #444; background: #5d8fcf; }
.filter { width: 42px; height: 13px; align-self: flex-start; margin-top: 1px; }
.coord { width: 44px; height: 12px; align-self: flex-start; margin: 1px 1px 0 4px; }
.sets { width: 79px; height: 12px; align-self: flex-start; margin: 1px 0 0 1px; }
.toolbar .grip:not(:first-child) { margin: 0 4px 0 2px; }

.work { display: grid; grid-template-columns: 22px 106px 29px minmax(0, 1fr) 181px; grid-template-rows: minmax(0, 1fr) 34px; }
.left-tools { grid-row: 1 / 3; padding-top: 6px; border-top: 1px solid #555; overflow: hidden; }
.left-tools .ico { height: 20px; }
.left-tools .ico svg { width: 16px; height: 16px; }
.left-tools hr { border: 0; height: 2px; margin: 2px 0 2px 3px; background: #292929; }

.explorer { display: flex; flex-direction: column; padding: 9px 3px 9px 0; border-top: 1px solid #5a5a5a; }
.ex-menu { display: flex; gap: 11px; padding-left: 8px; font-size: 8px; }
.more { color: #5757a5; text-align: right; padding-right: 2px; font-size: 10px; line-height: 10px; }
.ex-body { flex: 1; display: flex; margin-top: 10px; min-height: 0; }
.ex-filters { width: 13px; display: flex; flex-direction: column; gap: 2px; padding-top: 1px; }
.sq { width: 12px; height: 12px; flex: none; }
.sq.on { background: #5685c4; }
.sq svg { width: 10px; height: 10px; }
.ex-filters .sq + .sq:nth-child(even) { margin-top: 1px; }
.ex-filters hr { border: 0; height: 1px; flex: none; background: #282828; }
.ex-list { flex: 1; display: flex; flex-direction: column; border: 1px solid #3b3b3b; }
.ex-head { height: 13px; justify-content: flex-start; padding-left: 1px; border-bottom: 1px solid #3a3a3a; }
.ex-row { display: flex; align-items: center; height: 11px; padding-left: 9px; gap: 1px; }
.ex-row svg { width: 10px; height: 10px; }
.ex-row span { flex: 1; padding-left: 2px; background: #505050; }
.ex-scroll { display: flex; margin-top: auto; height: 11px; background: #f0f0f0; color: #333; }
.ex-scroll button { width: 11px; font: 10px/10px "Open Sans", sans-serif; }
.ex-scroll i { width: 34px; background: #c9c9c9; margin-right: auto; }

.gutter { display: flex; flex-direction: column; justify-content: flex-end; align-items: flex-end; gap: 7px; margin: 5px 2px 2px 0; background: #2e2e2e; }
.expand { width: 12px; height: 12px; margin-right: 8px; background: #585858; border-radius: 1px; }
.expand svg { width: 8px; height: 8px; }
.layout { width: 24px; height: 29px; display: grid; grid-template-columns: 9px 9px; grid-template-rows: 9px 9px; gap: 1px; align-content: center; align-items: stretch; background: linear-gradient(#49658a, #3f83dc); border: 1px solid #5d8fcf; }
.layout i { background: #65738a; border: 1px solid #2c3440; }

.views { display: grid; grid-template-columns: 319fr 364fr; grid-template-rows: 180fr 203fr; gap: 3px; background: #484848; }
.view { display: grid; background: #333; overflow: hidden; min-width: 0; min-height: 0; }
.view > * { grid-area: 1 / 1; min-height: 0; }
.view > svg { width: 100%; height: 100%; }
.view.active { background: linear-gradient(#191919, #4a4a4a); outline: 1px solid #7d682c; outline-offset: -1px; }
.tag { display: flex; gap: 1px; align-self: start; padding: 4px 3px; color: #c4c4c4; font: 7px/10px "DejaVu Sans", sans-serif; }
.grid { stroke: #4b4b4b; fill: none; }
.wire { fill: none; stroke: #d35353; stroke-width: 2; }
.ax { fill: none; stroke-width: 3; }
.halo { fill: none; stroke: #939aa0; stroke-width: 3; }
.cube { font: bold 13px Roboto, sans-serif; fill: #686e78; text-anchor: middle; }
.compass { font: bold 17px Roboto, sans-serif; fill: #aaa; text-anchor: middle; }

.panel { padding: 6px 9px 0 4px; border-top: 2px solid #595959; }
.tabs { display: flex; height: 16px; }
.tabs button { width: 21px; background: #3a3a3a; border-right: 1px solid #444; }
.tabs button.on { width: 19px; background: #444; }
.tabs svg { width: 12px; height: 12px; }
.cats { display: flex; padding: 2px 0 0 2px; }
.cats button { width: 16px; height: 16px; border-radius: 2px; }
.cats .on { background: #5685c4; }
.cats svg { width: 11px; height: 11px; }
.kind { height: 13px; margin: 4px -6px 3px 1px; background: #5c5c5c; }
.roll { background: #505050; margin: 0 0 2px 2px; padding: 0 5px 5px; }
.roll h2 { display: flex; align-items: center; gap: 4px; font: bold 8px/11px Roboto, sans-serif; }
.roll h2::before { content: ""; border: 2px solid transparent; border-top: 3px solid #ccc; border-bottom: 0; }
.roll h2::after { content: ""; width: 4px; height: 4px; margin-left: auto; background: #686868; }
.autogrid { display: flex; align-items: center; gap: 3px; margin: 3px 0 2px 43px; color: #858585; }
.autogrid input { appearance: none; width: 6px; height: 6px; background: #5b5b5b; }
.types { display: grid; grid-template-columns: 48px 48px; gap: 3px 7px; justify-content: center; }
.types button { height: 11px; background: #626262; border-radius: 1px; box-shadow: 0 1px #434343; }
.namecolor { display: flex; gap: 4px; padding: 5px 24px 2px 24px; }
.namecolor input { flex: 1; min-width: 0; height: 12px; background: #585858; border: 1px solid #494949; }
.swatch { width: 12px; height: 12px; background: #c72f82; border: 1px solid #222; }

.timeline { grid-column: 2 / 6; margin-left: 2px; padding-left: 4px; border-left: 1px solid #606060; }
.slider { display: flex; gap: 1px; padding: 3px 0 2px; }
.slider button { width: 9px; height: 12px; background: #5a5a5a; border-radius: 1px; }
.slider .thumb { width: 83px; background: #646464; }
.track { display: flex; height: 17px; border-top: 1px solid #292929; }
.mini { width: 33px; padding-right: 8px; }
.mini svg { width: 11px; height: 11px; }
.frames { flex: 1; margin-right: 34px; padding: 0 3px; background: linear-gradient(90deg, #88801e 5px, #292929 5px); }
.ticks { height: 7px; margin-right: -1px; background: linear-gradient(90deg, #626262 1px, transparent 1px) 0 0 / 1% 100%; }
.nums { display: flex; justify-content: space-between; line-height: 9px; color: #b5b5b5; }
.nums span { width: 0; display: flex; justify-content: center; }

.sim { padding-bottom: 2px; }
.sim .sep { margin: 0 3px; }
.sim .ico svg { width: 14px; height: 14px; }
.help { color: #b4bfcc; }

.status { display: flex; padding: 1px 8px 0 2px; }
.listener { width: 64px; background: #fff; border: 1px solid #888; display: grid; grid-template-rows: 15px 17px; margin-bottom: 1px; }
.listener i { background: #dcc2c5; border-bottom: 1px solid #666; }
.listener input { width: 100%; min-width: 0; padding-left: 2px; color: #777; font: 8px/12px "Liberation Mono", monospace; }
.messages { flex: 1; padding: 4px 0 0 3px; display: grid; grid-template-rows: 16px 16px; border-left: 2px solid #333; margin-left: 1px; }
.line { display: flex; align-items: center; height: 14px; }
.coords { display: grid; align-content: start; gap: 2px; padding-top: 1px; width: 291px; }
.coords label { display: flex; align-items: center; gap: 2px; margin-right: 8px; }
.coords label input { width: 38px; height: 11px; padding-left: 1px; background: #585858; color: #8a8a8a; }
.tiny { width: 16px; height: 14px; flex: none; }
.tiny svg { width: 10px; height: 10px; }
.coords .tiny + .tiny { width: 18px; }
.coords .tiny + label { margin-left: 2px; }
.gridsize { margin-left: 1px; }
.end { justify-content: flex-start; padding-left: 200px; }
.tag-btn { gap: 5px; margin-left: 3px; }
.tag-btn svg { width: 9px; height: 9px; }
.play { width: 86px; }
.big svg { width: 12px; height: 12px; }
.frame { display: flex; align-items: center; width: 46px; height: 11px; background: #5e5e5e; margin: 0 1px; padding: 0 3px; }
.frame input { flex: 1; min-width: 0; }
.frame svg { width: 4px; height: 8px; }
.keys { display: grid; grid-template-columns: 28px 31px 13px 60px; grid-template-rows: 13px 13px; gap: 2px 3px; padding-top: 1px; margin-right: 5px; }
.raised { background: #606060; border-radius: 2px; }
.setkey { grid-row: 1 / 3; }
.setkey svg { width: 24px; height: 24px; }
.auto { grid-area: 1 / 2; }
.setk { grid-area: 2 / 2; }
.keysel { grid-area: 1 / 3 / 2 / 5; }
.tangent { grid-area: 2 / 3; width: 13px; }
.filters { grid-area: 2 / 4; }
.nav { display: grid; grid-template-columns: repeat(4, 15px); grid-template-rows: 14px 14px; gap: 1px 0; }
.nav .tiny { width: 15px; }
.nav .tiny svg { width: 11px; height: 11px; }
```
